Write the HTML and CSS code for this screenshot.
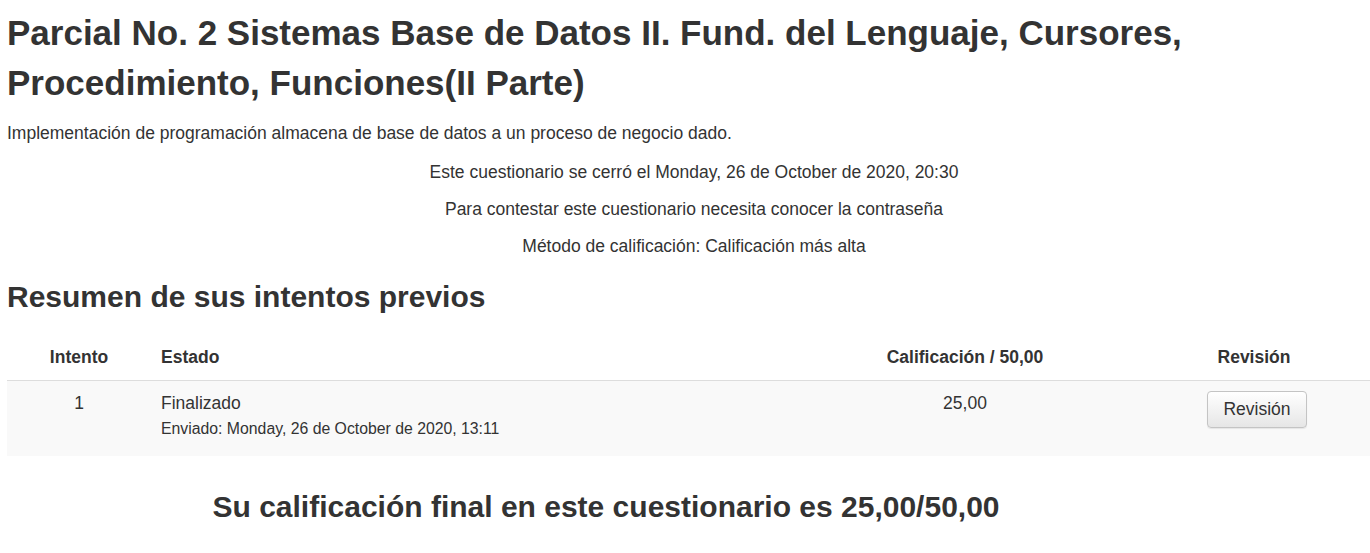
FILE: index.html
```html
<!DOCTYPE html>
<html lang="es">
<head>
<meta charset="utf-8">
<title>Parcial No. 2</title>
<link rel="stylesheet" href="styles.css">
</head>
<body>
<div class="page">
  <h2 class="title">Parcial No. 2 Sistemas Base de Datos II. Fund. del Lenguaje, Cursores, Procedimiento, Funciones(II Parte)</h2>
  <p class="intro">Implementación de programación almacena de base de datos a un proceso de negocio dado.</p>
  <div class="info">
    <p>Este cuestionario se cerró el Monday, 26 de October de 2020, 20:30</p>
    <p>Para contestar este cuestionario necesita conocer la contraseña</p>
    <p>Método de calificación: Calificación más alta</p>
  </div>
  <h3 class="summary">Resumen de sus intentos previos</h3>
  <table class="attempts">
    <colgroup>
      <col class="w0">
      <col>
      <col class="w2">
      <col class="w3">
    </colgroup>
    <thead>
      <tr>
        <th class="c0">Intento</th>
        <th class="c1">Estado</th>
        <th class="c2">Calificación / 50,00</th>
        <th class="c3">Revisión</th>
      </tr>
    </thead>
    <tbody>
      <tr>
        <td class="c0">1</td>
        <td class="c1">Finalizado<span class="sub">Enviado: Monday, 26 de October de 2020, 13:11</span></td>
        <td class="c2">25,00</td>
        <td class="c3"><button class="btn">Revisión</button></td>
      </tr>
    </tbody>
  </table>
  <h3 class="final">Su calificación final en este cuestionario es 25,00/50,00</h3>
</div>
</body>
</html>
```
FILE: styles.css
```css
html, body {
  margin: 0;
  padding: 0;
  background: #fff;
}
body {
  font-family: "Liberation Sans", Arial, sans-serif;
  color: #333;
  font-size: 17.5px;
}
.page {
  padding: 0 0 0 7px;
}
.title {
  margin: 0;
  padding-top: 8px;
  font-size: 35px;
  line-height: 50px;
  font-weight: bold;
  width: 1250px;
}
.intro {
  margin: 13px 0 0 0;
  font-size: 17.5px;
  line-height: 24px;
}
.info {
  text-align: center;
  margin-top: 15px;
  padding-left: 11px;
}
.info p {
  margin: 0 0 13px 0;
  font-size: 17.5px;
  line-height: 24px;
}
.info p:last-child {
  margin-bottom: 0;
}
.summary {
  margin: 21px 0 0 0;
  font-size: 30px;
  line-height: 36px;
  font-weight: bold;
}
.attempts {
  width: 100%;
  table-layout: fixed;
  border-collapse: collapse;
  margin-top: 22px;
}
.w0 { width: 144px; }
.w2 { width: 346px; }
.w3 { width: 232px; }
.attempts th {
  font-weight: bold;
  font-size: 17.5px;
  padding: 8px 8px 11px;
  line-height: 24px;
  border-bottom: 1px solid #ddd;
}
.attempts td {
  background: #f9f9f9;
  font-size: 17.5px;
  line-height: 24px;
  padding: 10px 8px 16px;
  vertical-align: top;
}
.attempts .c1 { padding-left: 10px; }
.c0 { text-align: center; }
.c1 { text-align: left; }
.c2 { text-align: center; }
.c3 { text-align: center; }
.sub {
  display: block;
  font-size: 15.8px;
  line-height: 22px;
  margin-top: 3px;
}
.btn {
  font-family: "Liberation Sans", Arial, sans-serif;
  font-size: 17.5px;
  color: #333;
  padding: 6px 15px;
  line-height: 23px;
  border: 1px solid #c4c4c4;
  border-radius: 4px;
  background: linear-gradient(#fff, #e6e6e6);
  box-shadow: 0 1px 1px rgba(0,0,0,0.08);
  margin: 0 0 0 6px;
  vertical-align: top;
}
.final {
  width: 1198px;
  text-align: center;
  margin: 33px 0 0 0;
  font-size: 30px;
  line-height: 36px;
  font-weight: bold;
}
```
